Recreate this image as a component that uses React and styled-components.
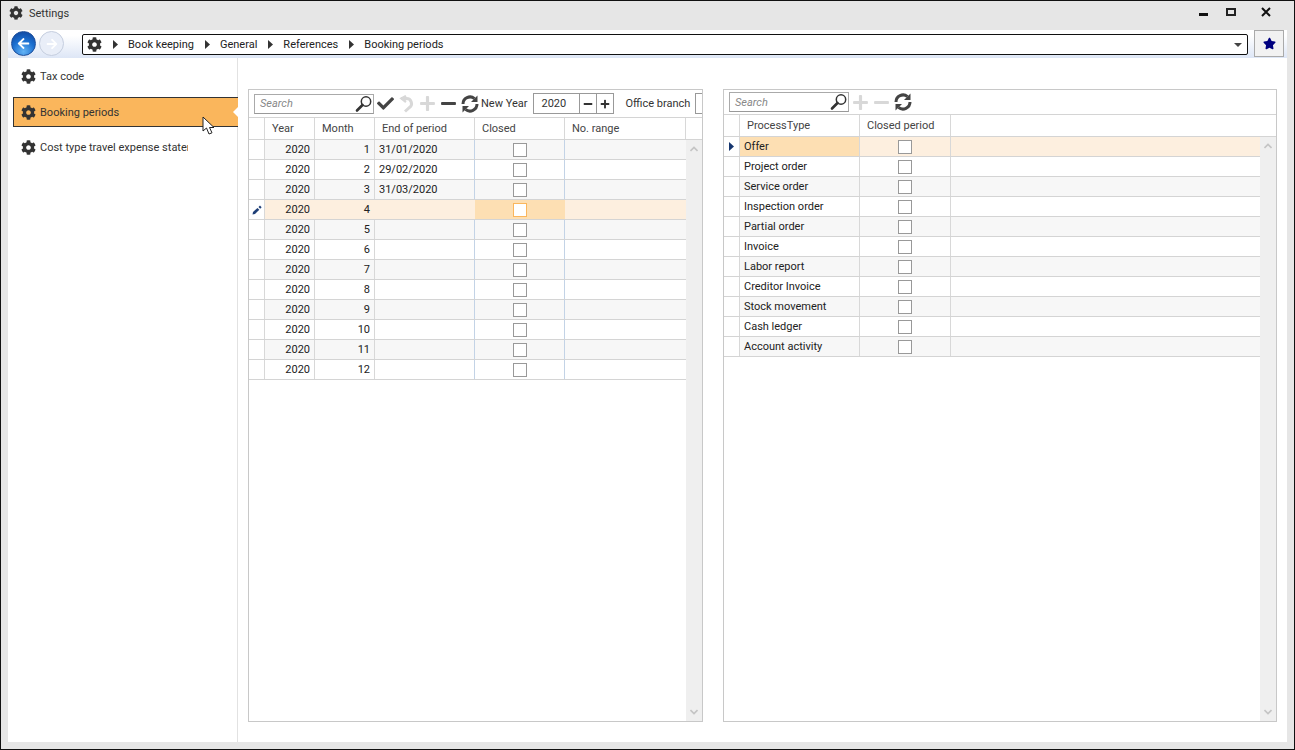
import styled, { createGlobalStyle } from "styled-components";
import { FaCog, FaCheck, FaPlus, FaMinus, FaStar, FaArrowLeft, FaArrowRight } from "react-icons/fa";

const GlobalStyle = createGlobalStyle`
  html, body { margin: 0; padding: 0; background: #fff; }
  * { box-sizing: border-box; }
  body { font-family: Roboto, "Noto Sans", sans-serif; font-size: 11px; color: #333; }
`;

const periods = [
  { month: 1, end: "31/01/2020" },
  { month: 2, end: "29/02/2020" },
  { month: 3, end: "31/03/2020" },
  { month: 4, end: "", editing: true },
  ...[5, 6, 7, 8, 9, 10, 11, 12].map((month) => ({ month, end: "" })),
];

const processTypes = [
  "Offer",
  "Project order",
  "Service order",
  "Inspection order",
  "Partial order",
  "Invoice",
  "Labor report",
  "Creditor Invoice",
  "Stock movement",
  "Cash ledger",
  "Account activity",
];

const crumbs = ["Book keeping", "General", "References", "Booking periods"];

const SearchIcon = () => (
  <svg width="18" height="18" viewBox="0 0 18 18" fill="none" stroke="#333">
    <circle cx="11" cy="6.5" r="4.7" strokeWidth="1.5" />
    <path d="M7.5 10 L2 15.5" strokeWidth="2.6" strokeLinecap="round" />
  </svg>
);

const RefreshIcon = () => (
  <svg width="20" height="20" viewBox="0 0 20 20" fill="none">
    <path d="M3 10A7 7 0 0 1 14.5 4.6" stroke="#444" strokeWidth="3" />
    <path d="M17 10A7 7 0 0 1 5.5 15.4" stroke="#444" strokeWidth="3" />
    <path d="M17.5 1.5V8H11z" fill="#444" />
    <path d="M2.5 18.5V12H9z" fill="#444" />
  </svg>
);

const UndoIcon = () => (
  <svg width="16" height="18" viewBox="0 0 16 18" fill="none" stroke="#d8d8d8" strokeWidth="3">
    <path d="M2 3.5h5.5a5 5 0 0 1 3 9L6 16.5" />
    <path d="M7 1 L2.5 3.5 L7 7" strokeWidth="2.4" />
  </svg>
);

const Arrow = () => (
  <svg width="5" height="9" viewBox="0 0 5 9">
    <path d="M0 0l5 4.5L0 9z" fill="#333" />
  </svg>
);

const PencilIcon = () => (
  <svg width="10" height="10" viewBox="0 0 10 10">
    <path d="M0.5 9.5 L1 7 L5.5 3 L7.3 4.7 L3 9z" fill="#1f3f77" />
    <path d="M6.5 2 L8 0.6 L9.6 2.2 L8.2 3.8z" fill="#1f3f77" />
  </svg>
);

const Cursor = styled.svg`
  position: absolute;
  left: 194px;
  top: 58px;
`;

const Window = styled.div`
  width: 1295px;
  height: 750px;
  background: #e6e6e6;
  border: 1px solid #111;
  display: flex;
  flex-direction: column;
  overflow: hidden;
`;

const TitleBar = styled.div`
  height: 29px;
  display: flex;
  align-items: center;
  padding: 0 0 5px 8px;
  gap: 6px;
  color: #333;
`;

const Title = styled.span`
  flex: 1;
  line-height: 15px;
`;

const WindowButtons = styled.div`
  display: flex;
  align-items: center;
  margin-right: 12px;
  margin-top: -3px;
`;

const WinButton = styled.span`
  width: ${(p) => p.$w}px;
  height: 16px;
  display: flex;
  align-items: center;
  justify-content: center;
`;

const MinGlyph = styled.i`
  width: 9px;
  height: 3px;
  margin-top: 6px;
  background: #111;
`;

const MaxGlyph = styled.i`
  width: 10px;
  height: 8px;
  border: 2px solid #222;
`;

const Content = styled.div`
  flex: 1;
  margin: 0 7px 7px 7px;
  background: #fff;
  display: flex;
  flex-direction: column;
  min-height: 0;
`;

const NavBar = styled.div`
  height: 28px;
  display: flex;
  align-items: flex-start;
  padding: 0 3px 0 3px;
  background: linear-gradient(#fff 0%, #fff 20%, #dde6f6 100%);
`;

const RoundButton = styled.span`
  width: 25px;
  height: 25px;
  margin-top: 1px;
  border-radius: 50%;
  display: flex;
  align-items: center;
  justify-content: center;
  color: #fff;
  background: ${(p) =>
    p.$active
      ? "radial-gradient(circle at 50% 85%, #63b3f5 0%, #1b6fd0 50%, #0d3f96 100%)"
      : "#e9eef8"};
  border: 1px solid ${(p) => (p.$active ? "#1d4f9c" : "#c5cedf")};
  margin-right: 3px;
`;

const Address = styled.div`
  width: 1166px;
  height: 21px;
  margin: 4px 0 0 15px;
  background: #fff;
  border: 1px solid #111;
  border-radius: 2px;
  display: flex;
  align-items: center;
  padding: 0 5px 0 4px;
  color: #222;
`;

const Crumb = styled.span`
  display: flex;
  align-items: center;
  gap: 10px;
  margin-left: 11px;
  line-height: 15px;
`;

const DropCaret = styled.i`
  margin-left: auto;
  width: 0;
  height: 0;
  border-left: 4px solid transparent;
  border-right: 4px solid transparent;
  border-top: 4px solid #444;
`;

const StarButton = styled.span`
  width: 30px;
  height: 27px;
  margin-left: 6px;
  background: #f2f2f2;
  border: 1px solid #aaa;
  display: flex;
  align-items: center;
  justify-content: center;
  color: #00007f;
`;

const Body = styled.div`
  flex: 1;
  position: relative;
  display: flex;
  min-height: 0;
`;

const Sidebar = styled.nav`
  width: 230px;
  border-right: 1px solid #e2e2e2;
  padding: 6px 0 0 5px;
  display: flex;
  flex-direction: column;
  gap: 8px;
  flex-shrink: 0;
`;

const SideItem = styled.div`
  position: relative;
  width: 225px;
  height: ${(p) => (p.$selected ? "30px" : "25px")};
  padding-left: ${(p) => (p.$selected ? "7px" : "8px")};
  display: flex;
  align-items: center;
  gap: 4px;
  color: #333;
  background: ${(p) => (p.$selected ? "#fab65c" : "transparent")};
  border: ${(p) => (p.$selected ? "1px solid #333" : "0")};
  border-right: 0;
`;

const SideLabel = styled.span`
  display: block;
  width: 148px;
  overflow: hidden;
  white-space: nowrap;
  line-height: 15px;
`;

const Notch = styled.i`
  position: absolute;
  right: 0;
  top: 9px;
  width: 0;
  height: 0;
  border-top: 5px solid transparent;
  border-bottom: 5px solid transparent;
  border-right: 5px solid #fff;
`;

const Main = styled.main`
  flex: 1;
  display: flex;
  gap: 20px;
  padding: 31px 10px 20px 10px;
  min-width: 0;
`;

const Panel = styled.section`
  width: ${(p) => p.$width}px;
  border: 1px solid #c8c8c8;
  display: flex;
  flex-direction: column;
  min-height: 0;
`;

const Toolbar = styled.div`
  height: ${(p) => p.$height}px;
  flex-shrink: 0;
  display: flex;
  align-items: center;
  padding-left: 5px;
  border-bottom: 1px solid #d4d4d4;
  overflow: hidden;
  white-space: nowrap;
`;

const SearchBox = styled.div`
  width: 120px;
  height: 20px;
  border: 1px solid #aaa;
  border-bottom-color: #999;
  display: flex;
  align-items: center;
  justify-content: space-between;
  padding: 0 0 0 5px;
  color: #888;
  font-style: italic;
  margin-right: 1px;
  flex-shrink: 0;
`;

const ToolIcon = styled.span`
  width: ${(p) => p.$w || 21}px;
  display: flex;
  align-items: center;
  justify-content: center;
  flex-shrink: 0;
  color: ${(p) => (p.$off ? "#d8d8d8" : "#444")};
`;

const ToolLabel = styled.span`
  margin-left: ${(p) => p.$gap || 0}px;
  color: #333;
  line-height: 15px;
`;

const YearInput = styled.div`
  margin-left: 6px;
  width: 81px;
  height: 21px;
  border: 1px solid #999;
  display: flex;
  align-items: center;
  flex-shrink: 0;
`;

const YearValue = styled.span`
  flex: 1;
  padding-left: 7px;
  color: #333;
`;

const StepButton = styled.span`
  width: 17px;
  height: 100%;
  border-left: 1px solid #999;
  display: flex;
  align-items: center;
  justify-content: center;
  color: #333;
`;

const BranchInput = styled.div`
  margin-left: 5px;
  width: 60px;
  height: 21px;
  border: 1px solid #999;
  flex-shrink: 0;
`;

const HeaderRow = styled.div`
  display: grid;
  grid-template-columns: ${(p) => p.$cols};
  height: 22px;
  flex-shrink: 0;
  border-bottom: 1px solid #d4d4d4;
`;

const HeaderCell = styled.div`
  border-right: 1px solid #d8d8d8;
  padding-left: ${(p) => p.$pad ?? 7}px;
  display: flex;
  align-items: center;
  color: #444;
  &:last-child {
    border-right: 0;
  }
`;

const GridArea = styled.div`
  flex: 1;
  display: flex;
  min-height: 0;
`;

const Rows = styled.div`
  flex: 1;
  min-width: 0;
`;

const Row = styled.div`
  display: grid;
  grid-template-columns: ${(p) => p.$cols};
  height: 20px;
  border-bottom: 1px solid #d4d4d4;
  background: ${(p) => (p.$current ? "#fdefdf" : p.$odd ? "#f7f7f7" : "#fff")};
`;

const Cell = styled.div`
  border-right: 1px solid ${(p) => (p.$line ? "#c3d3e6" : "#d8d8d8")};
  display: flex;
  align-items: center;
  justify-content: ${(p) => p.$justify || "flex-start"};
  padding: 0 ${(p) => p.$padRight ?? 4}px 0 ${(p) => p.$padLeft ?? 4}px;
  color: #222;
  line-height: 15px;
  background: ${(p) => (p.$active ? "#fddfb3" : p.$indicator ? "#fff" : "transparent")};
  ${(p) => p.$current && "border-right-color: transparent;"}
  &:last-child {
    border-right: 0;
  }
`;

const Check = styled.span`
  width: 14px;
  height: 14px;
  background: #fff;
  border: 1px solid ${(p) => (p.$active ? "#fab65c" : "#999")};
`;

const ScrollBar = styled.div`
  width: 16px;
  background: #efefef;
  flex-shrink: 0;
  display: flex;
  flex-direction: column;
  justify-content: space-between;
  align-items: center;
  padding: 6px 0;
`;

const Chevron = ({ down }) => (
  <svg width="8" height="6" viewBox="0 0 8 6" fill="none" stroke="#c4c4c4" strokeWidth="1.6">
    <path d={down ? "M0.5 1L4 4.5L7.5 1" : "M0.5 5L4 1.5L7.5 5"} />
  </svg>
);

const leftCols = "16px 50px 60px 100px 90px 1fr";
const rightCols = "16px 120px 91px 1fr";

const App = () => (
  <Window>
    <GlobalStyle />
    <TitleBar>
      <FaCog size={14} color="#333" />
      <Title>Settings</Title>
      <WindowButtons>
        <WinButton $w={17}><MinGlyph /></WinButton>
        <WinButton $w={37}><MaxGlyph /></WinButton>
        <WinButton $w={33}>
          <svg width="10" height="10" viewBox="0 0 10 10" stroke="#111" strokeWidth="2">
            <path d="M1 1l8 8M9 1l-8 8" />
          </svg>
        </WinButton>
      </WindowButtons>
    </TitleBar>
    <Content>
      <NavBar>
        <RoundButton $active><FaArrowLeft size={13} /></RoundButton>
        <RoundButton><FaArrowRight size={12} color="#fff" /></RoundButton>
        <Address>
          <FaCog size={15} color="#333" />
          {crumbs.map((crumb) => (
            <Crumb key={crumb}><Arrow />{crumb}</Crumb>
          ))}
          <DropCaret />
        </Address>
        <StarButton><FaStar size={13} /></StarButton>
      </NavBar>
      <Body>
        <Sidebar>
          <SideItem><FaCog size={15} color="#333" /><SideLabel>Tax code</SideLabel></SideItem>
          <SideItem $selected>
            <FaCog size={15} color="#333" />
            <SideLabel>Booking periods</SideLabel>
            <Notch />
          </SideItem>
          <SideItem><FaCog size={15} color="#333" /><SideLabel>Cost type travel expense statement</SideLabel></SideItem>
        </Sidebar>
        <Main>
          <Panel $width={455}>
            <Toolbar $height={28}>
              <SearchBox>Search<SearchIcon /></SearchBox>
              <ToolIcon><FaCheck size={17} /></ToolIcon>
              <ToolIcon $off><UndoIcon /></ToolIcon>
              <ToolIcon $off><FaPlus size={17} /></ToolIcon>
              <ToolIcon><FaMinus size={17} /></ToolIcon>
              <ToolIcon><RefreshIcon /></ToolIcon>
              <ToolLabel $gap={1}>New Year</ToolLabel>
              <YearInput>
                <YearValue>2020</YearValue>
                <StepButton><FaMinus size={10} /></StepButton>
                <StepButton><FaPlus size={10} /></StepButton>
              </YearInput>
              <ToolLabel $gap={11}>Office branch</ToolLabel>
              <BranchInput />
            </Toolbar>
            <HeaderRow $cols={`${leftCols} 16px`}>
              <HeaderCell />
              <HeaderCell>Year</HeaderCell>
              <HeaderCell>Month</HeaderCell>
              <HeaderCell>End of period</HeaderCell>
              <HeaderCell>Closed</HeaderCell>
              <HeaderCell>No. range</HeaderCell>
              <HeaderCell />
            </HeaderRow>
            <GridArea>
              <Rows>
                {periods.map((row, index) => (
                  <Row key={row.month} $cols={leftCols} $odd={index % 2 === 0} $current={row.editing}>
                    <Cell $indicator $justify="center" $padLeft={0} $padRight={0}>
                      {row.editing && <PencilIcon />}
                    </Cell>
                    <Cell $justify="flex-end" $current={row.editing}>2020</Cell>
                    <Cell $justify="flex-end" $current={row.editing}>{row.month}</Cell>
                    <Cell $line $current={row.editing}>{row.end}</Cell>
                    <Cell $line $justify="center" $active={row.editing} $current={row.editing}>
                      <Check $active={row.editing} />
                    </Cell>
                    <Cell />
                  </Row>
                ))}
              </Rows>
              <ScrollBar><Chevron /><Chevron down /></ScrollBar>
            </GridArea>
          </Panel>
          <Panel $width={554}>
            <Toolbar $height={25}>
              <SearchBox>Search<SearchIcon /></SearchBox>
              <ToolIcon $off><FaPlus size={17} /></ToolIcon>
              <ToolIcon $off><FaMinus size={17} /></ToolIcon>
              <ToolIcon><RefreshIcon /></ToolIcon>
            </Toolbar>
            <HeaderRow $cols={rightCols}>
              <HeaderCell />
              <HeaderCell>ProcessType</HeaderCell>
              <HeaderCell>Closed period</HeaderCell>
              <HeaderCell />
            </HeaderRow>
            <GridArea>
              <Rows>
                {processTypes.map((name, index) => (
                  <Row key={name} $cols={rightCols} $odd={index % 2 === 0 && index > 0} $current={index === 0}>
                    <Cell $indicator $justify="center" $padLeft={0} $padRight={0}>
                      {index === 0 && <svg width="5" height="9" viewBox="0 0 5 9"><path d="M0 0l5 4.5L0 9z" fill="#16366f" /></svg>}
                    </Cell>
                    <Cell $active={index === 0}>{name}</Cell>
                    <Cell $justify="center"><Check /></Cell>
                    <Cell />
                  </Row>
                ))}
              </Rows>
              <ScrollBar><Chevron /><Chevron down /></ScrollBar>
            </GridArea>
          </Panel>
        </Main>
        <Cursor width="18" height="20" viewBox="0 0 18 20">
          <path d="M1 1V15L4.5 12L7 18L10 16.8L7.5 11.5H12z" fill="#fff" stroke="#222" strokeWidth="1" />
        </Cursor>
      </Body>
    </Content>
  </Window>
);

export default App;
